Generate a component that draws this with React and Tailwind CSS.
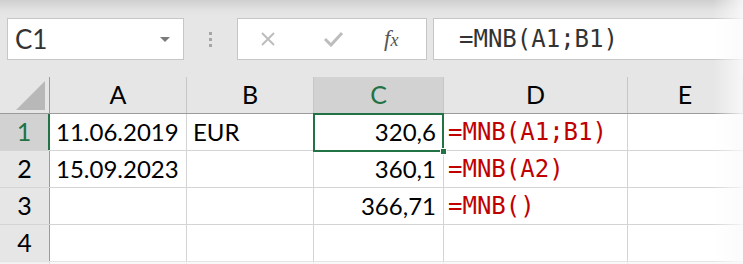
import React from "react";

const cols = [
  { key: "A", w: "w-[137px]" },
  { key: "B", w: "w-[127px]" },
  { key: "C", w: "w-[130px]" },
  { key: "D", w: "w-[184px]" },
  { key: "E", w: "flex-1" },
];

const rows = [
  { n: 1, A: "11.06.2019", B: "EUR", C: "320,6", D: "=MNB(A1;B1)" },
  { n: 2, A: "15.09.2023", B: "", C: "360,1", D: "=MNB(A2)" },
  { n: 3, A: "", B: "", C: "366,71", D: "=MNB()" },
  { n: 4, A: "", B: "", C: "", D: "" },
  { n: "", A: "", B: "", C: "", D: "" },
];

const cellFont = { fontFamily: "Lato, 'Open Sans', sans-serif" };
const monoFont = { fontFamily: "'DejaVu Sans Mono', 'Liberation Mono', monospace" };

const Cell = ({ col, value }) => {
  if (col === "C")
    return (
      <div className="w-[130px] h-full border-r border-[#d4d4d4] flex items-center justify-end pr-[7px] text-[24px] text-black" style={cellFont}>
        {value}
      </div>
    );
  if (col === "D")
    return (
      <div className="w-[184px] h-full border-r border-[#d4d4d4] flex items-center pl-[4px] text-[24px] text-[#c00000]" style={monoFont}>
        {value}
      </div>
    );
  const c = cols.find((x) => x.key === col);
  return (
    <div className={`${c.w} h-full border-r border-[#d4d4d4] flex items-center pl-[6px] text-[24px] text-black`} style={cellFont}>
      {value}
    </div>
  );
};

export default function App() {
  return (
    <div className="relative w-[743px] h-[264px] overflow-hidden bg-[#e6e6e6]">
      {/* toolbar */}
      <div className="h-[77px] pt-[18px] pl-[7px] flex items-start bg-[linear-gradient(to_bottom,#cfcfcf_0px,#e2e2e2_10px,#e6e6e6_16px)]">
        <div className="w-[177px] h-[42px] bg-white border border-[#c6c6c6] flex items-center pl-[7px] pr-[13px]">
          <span className="flex-1 text-[26px] text-[#333] pt-[1px]" style={cellFont}>C1</span>
          <span className="w-0 h-0 border-l-[5px] border-r-[5px] border-t-[5px] border-l-transparent border-r-transparent border-t-[#7a7a7a]" />
        </div>
        <div className="w-[53px] h-[42px] flex flex-col items-center justify-center gap-[3px]">
          <span className="w-[3px] h-[3px] bg-[#a6a6a6]" />
          <span className="w-[3px] h-[3px] bg-[#a6a6a6]" />
          <span className="w-[3px] h-[3px] bg-[#a6a6a6]" />
        </div>
        <div className="w-[190px] h-[42px] bg-white border border-[#c6c6c6] flex items-center">
          <svg width="16" height="16" viewBox="0 0 16 16" className="ml-[22px]">
            <path d="M2 2 L14 14 M14 2 L2 14" stroke="#bdbdbd" strokeWidth="2" fill="none" />
          </svg>
          <svg width="21" height="16" viewBox="0 0 21 16" className="ml-[47px]">
            <path d="M2 8 L8 14 L19 2" stroke="#bdbdbd" strokeWidth="3" fill="none" />
          </svg>
          <span className="ml-[40px] text-[23px] italic text-[#555]" style={{ fontFamily: "'Liberation Serif', serif" }}>
            f<span className="text-[18px]">x</span>
          </span>
        </div>
        <div className="ml-[6px] flex-1 h-[42px] bg-white border border-[#c6c6c6] border-r-0 flex items-center pl-[25px] text-[24px] text-[#333]" style={monoFont}>
          =MNB(A1;B1)
        </div>
      </div>

      {/* grid */}
      <div className="relative">
        <div className="flex h-[37px] border-b border-[#9b9b9b]">
          <div className="w-[50px] h-full border-r border-[#9b9b9b] flex items-end justify-end pr-[4px] pb-[3px]">
            <span className="w-0 h-0 border-l-[29px] border-b-[29px] border-l-transparent border-b-[#b8b8b8]" />
          </div>
          {cols.map((c) => (
            <div
              key={c.key}
              className={`${c.w} h-full border-r border-[#c6c6c6] flex items-center justify-center text-[25px] ${c.key === "C" ? "bg-[#d2d2d2] text-[#217346]" : "text-black"}`}
              style={cellFont}
            >
              {c.key}
            </div>
          ))}
        </div>
        {rows.map((r, i) => (
          <div key={i} className="flex h-[37px] border-b border-[#d4d4d4] bg-white">
            <div
              className={`w-[50px] h-full flex items-center justify-center text-[25px] ${r.n === 1 ? "bg-[#d2d2d2] text-[#217346] border-r-2 border-[#217346]" : "bg-[#e6e6e6] text-black border-r border-[#9b9b9b]"}`}
              style={cellFont}
            >
              {r.n}
            </div>
            <Cell col="A" value={r.A} />
            <Cell col="B" value={r.B} />
            <Cell col="C" value={r.C} />
            <Cell col="D" value={r.D} />
            <div className="flex-1 h-full" />
          </div>
        ))}

        {/* selection on C1 */}
        <div className="absolute left-[313px] top-[36px] w-[131px] h-[39px] border-2 border-[#217346] pointer-events-none" />
        <div className="absolute left-[440px] top-[71px] w-[7px] h-[7px] bg-[#217346] border border-white pointer-events-none" />
      </div>

      {/* edge fades */}
      <div className="absolute top-0 right-0 w-[30px] h-full bg-[linear-gradient(to_right,rgba(255,255,255,0),rgba(250,250,250,0.85))] pointer-events-none" />
      <div className="absolute left-0 bottom-0 w-full h-[3px] bg-[linear-gradient(to_bottom,rgba(255,255,255,0.3),rgba(245,245,245,0.9))] pointer-events-none" />
    </div>
  );
}
